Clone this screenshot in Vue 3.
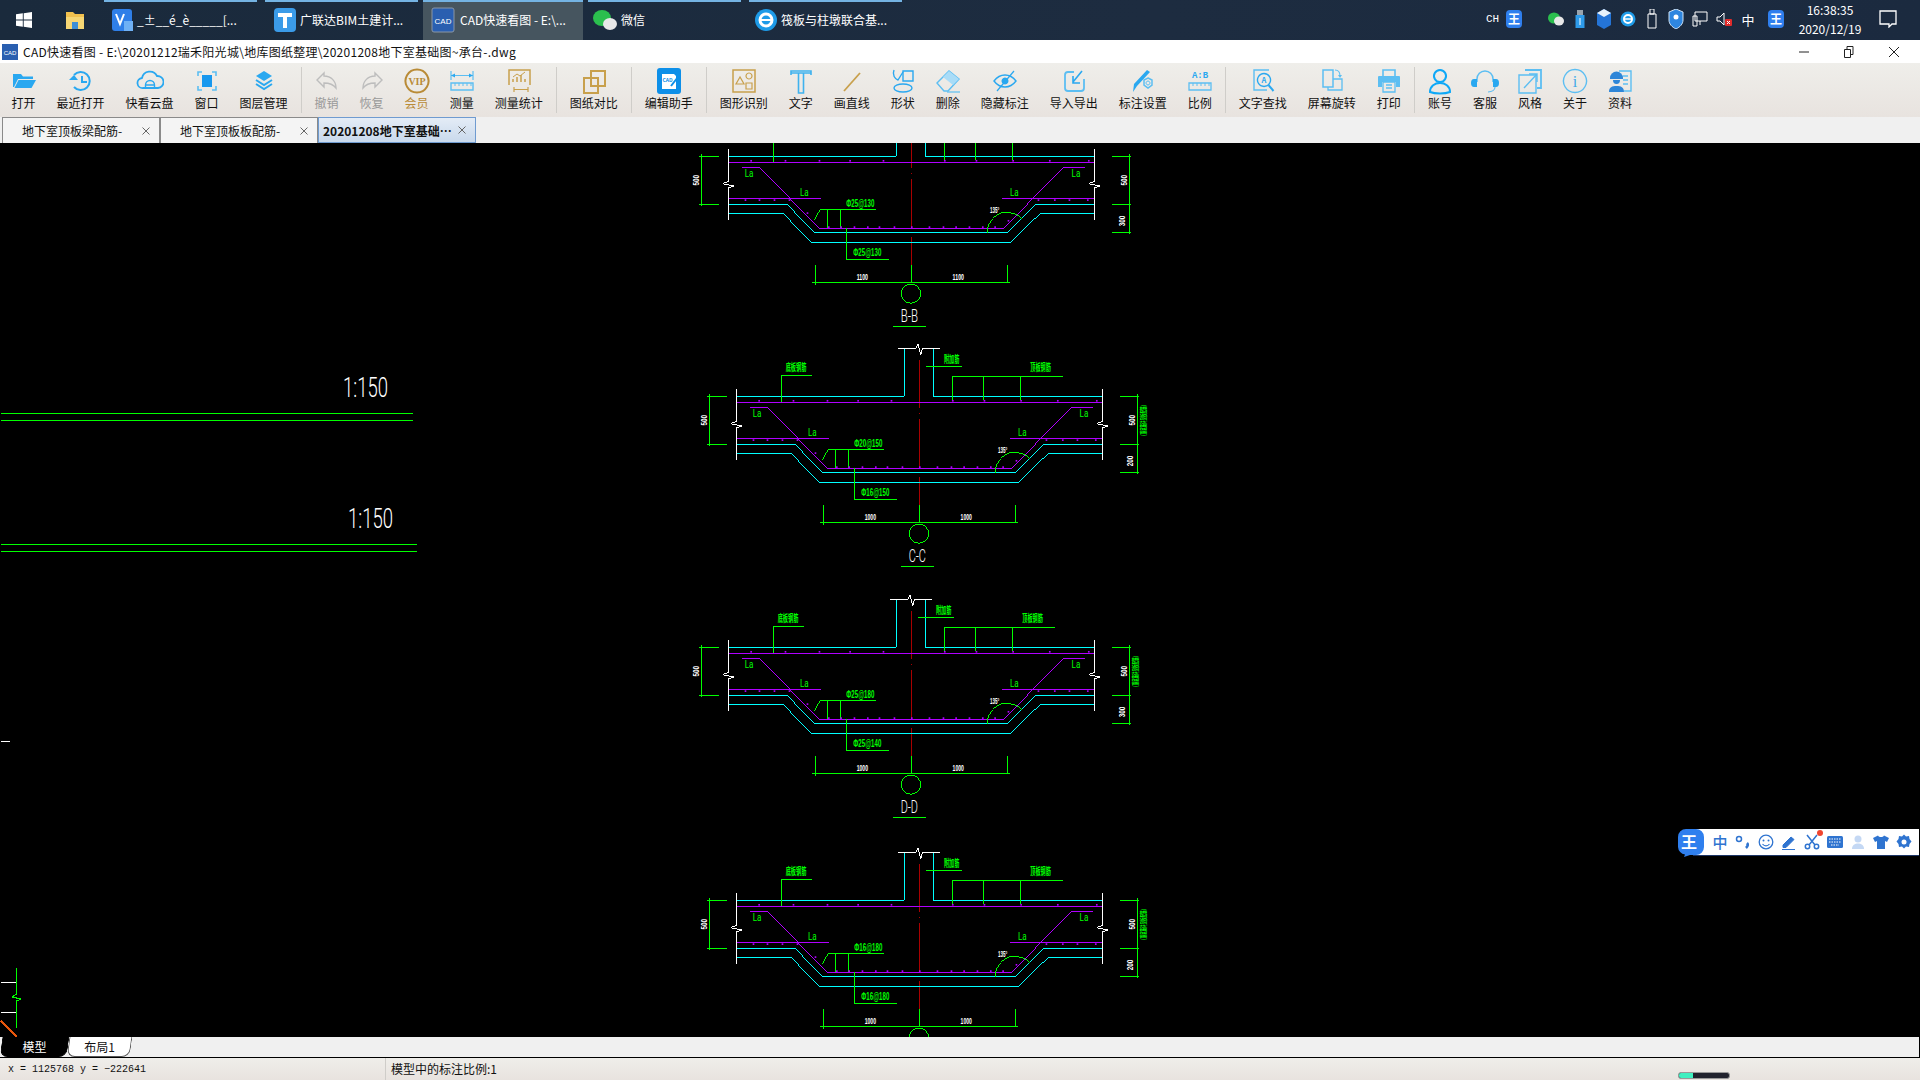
<script setup>
const BLUE = '#2aa8f0'
const SKY = '#5cbef2'
const GOLD = '#c8a04c'
const GREY = '#bdbdbd'

const s = (d, c = BLUE, w = 1.5) => ({ d, s: c, w })
const f = (d, c = BLUE) => ({ d, f: c })

const tools = [
  { label: '打开', icon: [f('M3 7h8l2 2.5h10V12H8L4 20H3z'), f('M8.5 13H26l-4.5 8H4.5z')] },
  { label: '最近打开', icon: [s('M7 8A9 9 0 1 1 7 20', BLUE, 2), s('M15 9v6h5', BLUE, 2), f('M2 13l5-5 4 5z')] },
  { label: '快看云盘', icon: [s('M7 21a5 5 0 0 1-1-10 8 8 0 0 1 15-2 6 6 0 0 1 1 12z', BLUE, 1.8), s('M9.5 21v-3a4.5 4.5 0 0 1 9 0v3M9.5 18h9', BLUE, 1.4)] },
  { label: '窗口', icon: [f('M9 8h10v12H9z', '#1898ee'), s('M5 9V5h4M19 5h4v4M23 19v4h-4M9 23H5v-4', SKY, 1.6)] },
  { label: '图层管理', icon: [f('M14 4l8 5-8 5-8-5z'), s('M6 13l8 5 8-5', BLUE, 2), s('M6 17l8 5 8-5', BLUE, 2)] },
  { sep: true },
  { label: '撤销', muted: true, icon: [s('M11 6L4 13l7 7v-4c5 0 9 1 12 5 0-7-5-12-12-12z', GREY, 1.4)] },
  { label: '恢复', muted: true, icon: [s('M17 6l7 7-7 7v-4c-5 0-9 1-12 5 0-7 5-12 12-12z', GREY, 1.4)] },
  { label: '会员', vip: true, icon: [s('M14 2.5a11.5 11.5 0 1 0 .01 0z', '#b98b37', 2)], it: { x: 14, y: 18, size: 10, fill: '#b98b37', text: 'VIP', bold: true, serif: true } },
  { label: '测量', icon: [s('M3 4v9M25 4v9M3 8.5h22', SKY, 1.2), f('M3 8.5l4-2v4zM25 8.5l-4-2v4z'), s('M3 16h22v7H3z', SKY, 1.4), s('M7 16v3M11 16v3M15 16v3M19 16v3M23 16v3', SKY, 1)] },
  { label: '测量统计', icon: [s('M4 18V3h21v15', GOLD, 1.5), s('M8 15v-3M12 15v-5M16 15v-7M20 15v-3', GOLD, 1.5), s('M8 10l4-3 3 2 5-4', GOLD, 1), s('M9 25v-5M23 25v-5M9 22.5h14', GOLD, 1.2)] },
  { sep: true },
  { label: '图纸对比', icon: [s('M11 4h14v15H11z', GOLD, 2), s('M4 11h14v15H4z', GOLD, 2)] },
  { sep: true },
  { label: '编辑助手', icon: [f('M5 1h18a3 3 0 0 1 3 3v20a3 3 0 0 1-3 3H5a3 3 0 0 1-3-3V4a3 3 0 0 1 3-3z', '#0d8fe8'), f('M7 7h12l2 2v13H7z', '#ffffff'), s('M16 19l7-9', '#0d8fe8', 2)], it: { x: 12.5, y: 15, size: 5, fill: '#0d8fe8', text: 'CAD', bold: true } },
  { sep: true },
  { label: '图形识别', icon: [s('M3 3h22v22H3z', GOLD, 1.5), s('M10 10l-4 7h8z', GOLD, 1.2), s('M19 6a3 3 0 1 0 .01 0z', GOLD, 1.2), s('M16 16h6v6h-6z', GOLD, 1.2)] },
  { label: '文字', icon: [s('M4 8V4h20v4M4 6h20', '#3fb2ee', 1.6), s('M11.5 6v20h5V6', '#3fb2ee', 1.6)] },
  { label: '画直线', icon: [s('M6 24L22 6', GOLD, 1.8)] },
  { label: '形状', icon: [s('M14 4h10v10H14z', BLUE, 1.4), s('M5 21a9 4 0 1 0 18 0 9 4 0 1 0-18 0', BLUE, 1.4), s('M5 3C3 8 6 12 9 13L14 5', BLUE, 1.4)] },
  { label: '删除', icon: [s('M3 16L15 4l10 8-11 12H10z', SKY, 1.4), f('M9 10l6-6 10 8-6 6z', '#a9dcf7'), s('M13 25h13', SKY, 1.2)] },
  { label: '隐藏标注', icon: [s('M3 14c6-8 16-8 22 0-6 8-16 8-22 0z', BLUE, 1.4), f('M14 10.5a3.5 3.5 0 1 0 .01 0z'), s('M6 24L23 4', BLUE, 1.2)] },
  { label: '导入导出', icon: [s('M14 5H8a3 3 0 0 0-3 3v13a3 3 0 0 0 3 3h13a3 3 0 0 0 3-3v-9', SKY, 1.8), s('M22 4L13 15M13 9v7h7', BLUE, 1.6)] },
  { label: '标注设置', icon: [f('M18 3l3 2-13 14-4 6 1-8z'), s('M19 11l4 2v5l-4 3-4-3v-5z', SKY, 1.5), s('M19 14a2 2 0 1 0 .01 0z', SKY, 1)] },
  { label: '比例', icon: [s('M3 16h22v7H3z', SKY, 1.3), s('M7 16v3M11 16v3M15 16v3M19 16v3M23 16v3', SKY, 1)], it: { x: 14, y: 11, size: 9, fill: BLUE, text: 'A:B', bold: true, mono: true } },
  { sep: true },
  { label: '文字查找', icon: [s('M20 3H5v20h13', SKY, 1.4), s('M15 6.5a6.5 6.5 0 1 0 .01 0z', BLUE, 1.4), s('M19.5 18l5 6', BLUE, 2)], it: { x: 15, y: 16, size: 7.5, fill: BLUE, text: 'A', bold: true } },
  { label: '屏幕旋转', icon: [s('M5 3h10v17H5z', SKY, 1.5), s('M15 12h9v11H10v-3', SKY, 1.3), s('M17 3c3 0 5 2 5 6', SKY, 1.1), f('M20 8h4l-2 3z', SKY)] },
  { label: '打印', icon: [s('M8 9V3h12v6', SKY, 1.6), f('M4 9h20a1 1 0 0 1 1 1v10h-4v-5H7v5H3V10a1 1 0 0 1 1-1z', SKY), s('M8 15h12v10H8zM11 18h6M11 21h6', SKY, 1.3)] },
  { sep: true },
  { label: '账号', icon: [s('M14 3a6 6 0 1 0 .01 0z', '#0ea8f7', 2), s('M4 25c0-6 5-9 10-9s10 3 10 9c-5 2-15 2-20 0z', '#0ea8f7', 2)] },
  { label: '客服', icon: [s('M6 15v-3a8 8 0 0 1 16 0v3', SKY, 1.5), f('M3 12h3v8H3a3 4 0 0 1 0-8zM22 12h3a3 4 0 0 1 0 8h-3z', BLUE), s('M24 20c0 3-3 5-7 5', SKY, 1.2)] },
  { label: '风格', icon: [s('M9 3h16v18h-4', SKY, 1.8), s('M3 8h17v18H3z', SKY, 1.4), s('M8 21L21 7M13 7h8v8', SKY, 1.4)] },
  { label: '关于', icon: [s('M14 2.5a11.5 11.5 0 1 0 .01 0z', SKY, 1.4)], it: { x: 14, y: 20, size: 16, fill: '#3fa9e8', text: 'i', serif: true } },
  { label: '资料', icon: [s('M13 4h12v20H18M17 9h5M17 13h5M17 17h5', SKY, 1.4), f('M4 11a6.5 6.5 0 0 1 13 0v1H4z', '#2e86d8'), f('M7 13h7a3.5 4 0 0 1-7 0zM3 25c0-5 3-6 7.500-6s7.500 1 7.500 6z', '#2e86d8')] }
]

const tabs = [
  { name: '地下室顶板梁配筋-' },
  { name: '地下室顶板板配筋-' },
  { name: '20201208地下室基础…', active: true }
]

const sections = [
  { cx: 911.3, top: 108.3, name: 'B-B', bar1: 'Φ25@130', bar2: 'Φ25@130', dim: '1100', h2: '300' },
  { cx: 919.3, top: 348.3, name: 'C-C', bar1: 'Φ20@150', bar2: 'Φ16@150', dim: '1000', h2: '200', full: true },
  { cx: 911.3, top: 599.3, name: 'D-D', bar1: 'Φ25@180', bar2: 'Φ25@140', dim: '1000', h2: '300', full: true },
  { cx: 919.3, top: 852.3, name: '', bar1: 'Φ16@180', bar2: 'Φ16@180', dim: '1000', h2: '200', full: true }
]

// 所有坐标按 C-C 剖面量取，再按组平移
const white = 'M169 747V845L152 851L186 858L169 864V960M1267 747V845L1250 851L1284 858L1267 864V960M655 625H708L714 612L722 645L728 625H780'
const cyan = 'M170 769H673V625M760 625V769H1267M170 913H345L427 997H1008L1090 913H1267M170 940H333L418 1027H1017L1105 940H1267'
const purple = 'M168 787H1267M210 802H262L442 985H995L1175 802H1238M168 895H447M990 895H1267'
const red = 'M718 660V803M718 818V823M718 838V985M718 1010V1095'
const green = 'M88 763V918M82 769H141M82 913H141M1373 763V1003M1320 769H1378M1320 913H1378M1320 997H1378M304 787V706H395M738 679H846M817 780V709H1148M910 709V780M1021 709V780M427 960L445 928H611M466 928V985M505 928V985M523 985V1078H650M430 1095V1155M1006 1095V1150M420 1147H1013M718 1095V1150M947 1000V985C955 955 980 937 1000 937C1020 937 1040 945 1050 957'

const dots = [
  [235, 780], [338, 780], [440, 780], [532, 780], [632, 780], [816, 780], [911, 780], [1021, 780], [1131, 780], [1248, 780],
  [218, 898], [260, 898], [305, 898], [350, 898], [1097, 898], [1146, 898], [1190, 898], [1245, 898],
  [468, 979], [505, 979], [545, 979], [585, 979], [620, 979], [665, 979], [717, 979], [770, 979], [812, 979], [850, 979], [890, 979], [930, 979], [967, 979],
  [404, 937], [1007, 960]
]

const laMarks = [
  { x: 231, y: 832 },
  { x: 397, y: 887 },
  { x: 1212, y: 832 },
  { x: 1027, y: 887 }
]
</script>

<template>
  <div class="screen">
    <div class="taskbar">
      <div class="start">
        <svg width="16" height="16" viewBox="0 0 16 16"><path d="M0 2.300 6.800 1.300V7.500H0zM7.700 1.200 16 0V7.500H7.700zM0 8.400H6.800V14.700L0 13.700zM7.700 8.400H16V16L7.700 14.800z" fill="#fff"/></svg>
      </div>
      <div class="explorer">
        <svg width="22" height="22" viewBox="0 0 22 22"><path d="M2 3h7l2 2h9v15H2z" fill="#f2c14e"/><path d="M2 8h18v12H2z" fill="#f7d774"/><path d="M8 13h6v7H8z" fill="#3d8fd6"/></svg>
      </div>
      <div class="task">
        <svg width="22" height="26" viewBox="0 0 22 26"><rect y="2" width="20" height="22" rx="3" fill="#2f7fe8"/><path d="M4 7l4 10 4-10" stroke="#fff" stroke-width="2" fill="none"/><rect x="12" y="14" width="9" height="10" fill="#6fb1f5"/></svg>
        <span>_±__é_è_____[...</span>
      </div>
      <div class="task">
        <svg width="24" height="26" viewBox="0 0 24 26"><rect x="1" y="1" width="22" height="24" rx="4" fill="#3b9be8"/><path d="M5 6h14v4h-5v11h-4V10H5z" fill="#fff"/></svg>
        <span>广联达BIM土建计...</span>
      </div>
      <div class="task task-active">
        <svg width="24" height="26" viewBox="0 0 24 26"><rect x="1" y="1" width="22" height="24" rx="2" fill="#2a5fb0" stroke="#8a97a5"/><text x="12" y="17" class="ico-cad">CAD</text></svg>
        <span>CAD快速看图 - E:\...</span>
      </div>
      <div class="task task-wx">
        <svg width="26" height="26" viewBox="0 0 26 26"><ellipse cx="10" cy="11" rx="9" ry="8" fill="#2bbf4e"/><ellipse cx="18" cy="17" rx="7" ry="6" fill="#e8e8e8"/></svg>
        <span>微信</span>
      </div>
      <div class="task task-ie">
        <svg width="24" height="26" viewBox="0 0 24 26"><circle cx="12" cy="13" r="11" fill="#1e9be8"/><circle cx="12" cy="13" r="6" fill="none" stroke="#fff" stroke-width="3"/><path d="M6 13h12" stroke="#fff" stroke-width="2"/></svg>
        <span>筏板与柱墩联合基...</span>
      </div>

      <div class="tray">
        <span class="tray-ch">CH</span>
        <span class="wang">王</span>
        <span class="slot"><svg width="18" height="16" viewBox="0 0 18 16"><ellipse cx="7" cy="7" rx="6" ry="5.500" fill="#2bbf4e"/><ellipse cx="12" cy="10" rx="5" ry="4.500" fill="#e8e8e8"/></svg></span>
        <span class="slot"><svg width="12" height="18" viewBox="0 0 12 18"><rect x="3" y="0" width="6" height="5" fill="#9aa4ad"/><rect x="1.500" y="5" width="9" height="13" fill="#2e9bea"/><path d="M6 8v7" stroke="#fff"/></svg></span>
        <span class="slot"><svg width="16" height="20" viewBox="0 0 16 20"><path d="M8 0l7 4v12l-7 4-7-4V4z" fill="#2474d6"/><path d="M8 0l7 4-7 4-7-4z" fill="#e8f2fb"/></svg></span>
        <span class="slot"><svg width="16" height="16" viewBox="0 0 16 16"><circle cx="8" cy="8" r="7.500" fill="#1e9be8"/><circle cx="8" cy="8" r="4" fill="none" stroke="#fff" stroke-width="2"/><path d="M4 8h8" stroke="#fff" stroke-width="1.500"/></svg></span>
        <span class="slot"><svg width="12" height="20" viewBox="0 0 12 20"><path d="M4 0h4v5H4zM2 5h8v14H2z" fill="none" stroke="#fff"/></svg></span>
        <span class="slot"><svg width="16" height="20" viewBox="0 0 16 20"><path d="M8 0l7 3v8c0 4-3 7-7 9-4-2-7-5-7-9V3z" fill="#2e86e0" stroke="#cfe4f8"/><circle cx="8" cy="8" r="2.500" fill="#fff"/></svg></span>
        <span class="slot"><svg width="16" height="16" viewBox="0 0 16 16"><path d="M3 1h12v9H3zM8 10v4M1 5h4v10H1z" fill="none" stroke="#fff"/></svg></span>
        <span class="slot"><svg width="16" height="16" viewBox="0 0 16 16"><path d="M1 6h3l4-4v12l-4-4H1z" fill="none" stroke="#fff"/><rect x="9" y="8" width="7" height="7" rx="1" fill="#e02b2b"/><path d="M11 10l3 3M14 10l-3 3" stroke="#fff"/></svg></span>
        <span class="slot tray-zh">中</span>
        <span class="wang wang-2">王</span>
        <div class="clock">
          <span>16:38:35</span>
          <span>2020/12/19</span>
        </div>
        <svg class="notify" width="18" height="18" viewBox="0 0 18 18"><path d="M1 1h16v13h-4l-3 3v-3H1z" fill="none" stroke="#fff" stroke-width="1.300"/></svg>
      </div>
    </div>

    <div class="titlebar">
      <svg width="16" height="16" viewBox="0 0 16 16"><rect width="16" height="16" fill="#2a5fb0"/><text x="8" y="11" class="ico-cad-small">CAD</text></svg>
      <span class="title-text">CAD快速看图 - E:\20201212瑞禾阳光城\地库图纸整理\20201208地下室基础图~承台-.dwg</span>
      <div class="win-btns">
        <svg width="12" height="12" viewBox="0 0 12 12"><path d="M1 6h10" stroke="#222"/></svg>
        <svg width="12" height="12" viewBox="0 0 12 12"><path d="M1.500 3.500h6v8h-6zM4 3.500V.5h6v8H7.500" fill="none" stroke="#222"/></svg>
        <svg width="12" height="12" viewBox="0 0 12 12"><path d="M1 1l10 10M11 1L1 11" stroke="#222"/></svg>
      </div>
    </div>

    <div class="toolbar">
      <template v-for="(t, i) in tools" :key="i">
        <div v-if="t.sep" class="tool-sep"></div>
        <div v-else class="tool" :class="{ muted: t.muted, vip: t.vip }">
          <svg class="tool-icon" width="28" height="28" viewBox="0 0 28 28">
            <path v-for="(p, j) in t.icon" :key="j" :d="p.d" :fill="p.f || 'none'" :stroke="p.s || 'none'" :stroke-width="p.w || 0" />
            <text v-if="t.it" :x="t.it.x" :y="t.it.y" :fill="t.it.fill" :font-size="t.it.size" text-anchor="middle" :class="{ 'it-bold': t.it.bold, 'it-serif': t.it.serif, 'it-mono': t.it.mono }">{{ t.it.text }}</text>
          </svg>
          <span class="tool-label">{{ t.label }}</span>
        </div>
      </template>
    </div>

    <div class="tabs">
      <div v-for="tab in tabs" :key="tab.name" class="tab" :class="{ active: tab.active }">
        <span class="tab-name">{{ tab.name }}</span>
        <svg class="tab-close" width="8" height="8" viewBox="0 0 8 8"><path d="M.5.500l7 7M7.500.500l-7 7" stroke="#666"/></svg>
      </div>
    </div>

    <div class="canvas">
      <svg class="drawing" width="1920" height="894" viewBox="0 143 1920 894">
        <g shape-rendering="crispEdges" fill="none">
          <path d="M1 413.500H413M1 420.500H413M1 544.500H417M1 551.500H417" stroke="#00ff00" />
          <path d="M1 741.500H10M1 982.500H16M1 1012.500H16" stroke="#fff" />
          <path d="M16.500 968V994L12 997L21 999L16.500 1001V1028" stroke="#00ff00" />
          <path d="M1 1021L17 1037" stroke="#e8560c" stroke-width="2" />
        </g>
        <text x="343" y="397" textLength="45" lengthAdjust="spacingAndGlyphs" class="scale-text">1:150</text>
        <text x="348" y="528" textLength="45" lengthAdjust="spacingAndGlyphs" class="scale-text">1:150</text>

        <g v-for="sec in sections" :key="sec.cx + '-' + sec.top" :transform="`translate(${sec.cx} ${sec.top}) scale(0.3333) translate(-718 -625)`">
          <g shape-rendering="crispEdges" fill="none" stroke-width="3">
            <path :d="red" stroke="#a80000" />
            <path :d="cyan" stroke="#00ffff" />
            <path :d="purple" stroke="#b000ff" />
            <path :d="white" stroke="#fff" />
            <path :d="green" stroke="#00ff00" />
            <circle cx="717" cy="1181" r="29" stroke="#00ff00" />
            <path v-if="sec.name" d="M663 1281H762" stroke="#00ff00" />
          </g>
          <rect v-for="d in dots" :key="d[0] + '-' + d[1]" :x="d[0]" :y="d[1]" width="5" height="5" fill="#b000ff" />

          <text v-for="m in laMarks" :key="m.x" :x="m.x" :y="m.y" text-anchor="middle" textLength="26" lengthAdjust="spacingAndGlyphs" class="t-la">La</text>

          <template v-if="sec.full">
            <text x="348" y="694" text-anchor="middle" textLength="62" lengthAdjust="spacingAndGlyphs" class="t-cn">底板钢筋</text>
            <text x="815" y="668" text-anchor="middle" textLength="46" lengthAdjust="spacingAndGlyphs" class="t-cn">附加筋</text>
            <text x="1082" y="694" text-anchor="middle" textLength="62" lengthAdjust="spacingAndGlyphs" class="t-cn">顶板钢筋</text>
            <text transform="translate(1397 842) rotate(-90)" text-anchor="middle" textLength="105" lengthAdjust="spacingAndGlyphs" class="t-note">（顶底筋详见板配筋）</text>
          </template>

          <text x="565" y="920" text-anchor="middle" textLength="84" lengthAdjust="spacingAndGlyphs" class="t-bar">{{ sec.bar1 }}</text>
          <text x="586" y="1069" text-anchor="middle" textLength="84" lengthAdjust="spacingAndGlyphs" class="t-bar">{{ sec.bar2 }}</text>
          <text x="968" y="938" text-anchor="middle" textLength="28" lengthAdjust="spacingAndGlyphs" class="t-white">135°</text>

          <text x="571" y="1139" text-anchor="middle" textLength="34" lengthAdjust="spacingAndGlyphs" class="t-white">{{ sec.dim }}</text>
          <text x="859" y="1139" text-anchor="middle" textLength="34" lengthAdjust="spacingAndGlyphs" class="t-white">{{ sec.dim }}</text>

          <text transform="translate(80 841) rotate(-90)" text-anchor="middle" textLength="32" lengthAdjust="spacingAndGlyphs" class="t-white">500</text>
          <text transform="translate(1364 841) rotate(-90)" text-anchor="middle" textLength="32" lengthAdjust="spacingAndGlyphs" class="t-white">500</text>
          <text transform="translate(1358 963) rotate(-90)" text-anchor="middle" textLength="32" lengthAdjust="spacingAndGlyphs" class="t-white">{{ sec.h2 }}</text>

          <text v-if="sec.name" x="712" y="1266" text-anchor="middle" textLength="52" lengthAdjust="spacingAndGlyphs" class="t-name">{{ sec.name }}</text>
        </g>
      </svg>

      <div class="ime">
        <svg class="ime-logo" width="28" height="30" viewBox="0 0 28 30"><path d="M9 1h10a8 8 0 0 1 8 8v10a8 8 0 0 1-8 8H13l-6 2 1-2.500A8 8 0 0 1 1 19V9a8 8 0 0 1 8-8z" fill="#2f7fee"/></svg>
        <span class="ime-logo-text">王</span>
        <span class="ime-zh">中</span>
        <svg width="16" height="16" viewBox="0 0 16 16"><circle cx="4" cy="5" r="2.500" fill="none" stroke="#2f74d0" stroke-width="1.500"/><path d="M12 9c1 1 1 3-1 5" stroke="#2f74d0" stroke-width="2.500" fill="none"/></svg>
        <svg width="16" height="16" viewBox="0 0 16 16"><circle cx="8" cy="8" r="6.800" fill="none" stroke="#2f74d0" stroke-width="1.300"/><circle cx="5.500" cy="6.500" r="1" fill="#2f74d0"/><circle cx="10.500" cy="6.500" r="1" fill="#2f74d0"/><path d="M4.500 10c2 2.500 5 2.500 7 0" fill="none" stroke="#2f74d0" stroke-width="1.200"/></svg>
        <svg width="16" height="16" viewBox="0 0 16 16"><path d="M2 11l8-8 3 2.500-8 8H2zM1 15.500h13" fill="#2f74d0" stroke="#2f74d0"/></svg>
        <span class="ime-scissors">
          <svg width="16" height="16" viewBox="0 0 16 16"><circle cx="3.500" cy="12.500" r="2.200" fill="none" stroke="#2f74d0" stroke-width="1.500"/><circle cx="12.500" cy="12.500" r="2.200" fill="none" stroke="#2f74d0" stroke-width="1.500"/><path d="M5 11L13 1M11 11L3 1" stroke="#2f74d0" stroke-width="1.500"/></svg>
          <i class="ime-dot"></i>
        </span>
        <svg width="16" height="16" viewBox="0 0 16 16"><rect y="2" width="16" height="12" rx="1.500" fill="#2f74d0"/><path d="M2 5h12M2 8h12M4 11h8" stroke="#fff" stroke-dasharray="1.500 1" fill="none"/></svg>
        <svg width="16" height="16" viewBox="0 0 16 16"><circle cx="8" cy="5" r="3.500" fill="#c4d8f4"/><path d="M2 15c0-4 3-5.500 6-5.500s6 1.500 6 5.500z" fill="#c4d8f4"/></svg>
        <svg width="16" height="16" viewBox="0 0 16 16"><path d="M5 1.500L0 4l2 4 2-1v8h8V7l2 1 2-4-5-2.500c-1 2-5 2-6 0z" fill="#2f74d0"/></svg>
        <svg width="16" height="16" viewBox="0 0 16 16"><path d="M8 .5l2 2 3-.5.500 3 2 2.500-2 2.500-.5 3-3-.5-2 2-2-2-3 .5-.5-3-2-2.500 2-2.500.5-3 3 .5z" fill="#2f74d0"/><circle cx="8" cy="8" r="2.500" fill="#fff"/></svg>
      </div>
    </div>

    <div class="sheets">
      <div class="sheet sheet-active"><span>模型</span></div>
      <div class="sheet"><span>布局1</span></div>
    </div>

    <div class="statusbar">
      <span class="coords">x = 1125768 y = −222641</span>
      <span class="scale-note">模型中的标注比例:1</span>
      <div class="progress"><div class="progress-fill"></div></div>
    </div>
  </div>
</template>

<style scoped>
.screen {
  width: 1920px;
  height: 1080px;
  display: flex;
  flex-direction: column;
  overflow: hidden;
  font-family: "Noto Sans CJK SC", "Liberation Sans", sans-serif;
  font-size: 12px;
  color: #111;
}

.taskbar {
  height: 40px;
  flex-shrink: 0;
  display: flex;
  align-items: stretch;
  background: linear-gradient(90deg, #1a2a3c, #1d2c40 60%, #1b2a3f);
  color: #fff;
}

.start {
  width: 48px;
  display: flex;
  align-items: center;
  justify-content: center;
}

.explorer {
  width: 56px;
  box-sizing: border-box;
  padding-right: 2px;
  display: flex;
  align-items: center;
  justify-content: center;
}

.task {
  width: 153px;
  margin-right: 8px;
  padding: 0 0 3px 8px;
  box-sizing: border-box;
  display: flex;
  align-items: center;
  gap: 3px;
  border-top: 2px solid #74b3e3;
  white-space: nowrap;
  overflow: hidden;
}

.task-active {
  width: 160px;
  margin-left: -3px;
  margin-right: 5px;
  gap: 5px;
  background: #46555f;
}

.task-wx {
  padding-left: 4px;
}

.task-ie {
  padding-left: 5px;
}

.ico-cad {
  font-size: 8px;
  fill: #fff;
  text-anchor: middle;
  font-family: "Liberation Sans", sans-serif;
}

.ico-cad-small {
  font-size: 6px;
  fill: #fff;
  text-anchor: middle;
  font-family: "Liberation Sans", sans-serif;
}

.tray {
  margin-left: auto;
  display: flex;
  align-items: center;
  padding: 0 23px 2px 0;
}

.tray-ch {
  width: 12px;
  margin-right: 8px;
  font-size: 11px;
  font-family: "Liberation Mono", monospace;
}

.wang {
  width: 16px;
  height: 18px;
  border-radius: 4px;
  background: #2f7fee;
  color: #fff;
  font-size: 12px;
  font-weight: 700;
  line-height: 18px;
  text-align: center;
  margin-right: 22px;
}

.slot {
  width: 24px;
  display: flex;
  justify-content: center;
}

.tray-zh {
  font-size: 13px;
}

.wang-2 {
  margin: 0 0 0 8px;
}

.clock {
  width: 74px;
  margin-left: 9px;
  display: flex;
  flex-direction: column;
  align-items: center;
  gap: 2px;
  line-height: 17px;
}

.notify {
  margin-left: 12px;
}

.titlebar {
  height: 23px;
  flex-shrink: 0;
  display: flex;
  align-items: center;
  padding-left: 2px;
  background: #fff;
}

.title-text {
  margin-left: 5px;
  letter-spacing: 0.27px;
  white-space: nowrap;
}

.win-btns {
  margin-left: auto;
  display: flex;
  gap: 33px;
  padding-right: 20px;
}

.toolbar {
  height: 54px;
  flex-shrink: 0;
  display: flex;
  padding-left: 1px;
  background: linear-gradient(180deg, #efeeea, #e8e3df);
}

.tool {
  padding: 4px 10.500px 0;
  display: flex;
  flex-direction: column;
  align-items: center;
  flex-shrink: 0;
}

.tool-icon {
  height: 28px;
  margin: 0 -4px;
}

.tool-label {
  line-height: 16px;
  white-space: nowrap;
}

.muted .tool-label {
  color: #999;
}

.vip .tool-label {
  color: #b98b37;
}

.tool-sep {
  width: 1px;
  margin: 4px 2px 4px 3px;
  background: #cfcdc9;
  flex-shrink: 0;
}

.it-bold {
  font-weight: 700;
}

.it-serif {
  font-family: "Liberation Serif", serif;
}

.it-mono {
  font-family: "Liberation Mono", monospace;
}

.tabs {
  height: 26px;
  flex-shrink: 0;
  display: flex;
  padding-left: 2px;
  background: #f0f0f0;
}

.tab {
  width: 158px;
  box-sizing: border-box;
  display: flex;
  align-items: center;
  padding: 0 9px 0 19px;
  border: 1px solid #8a8a8a;
  border-width: 1px 1px 0 1px;
  background: #f4f4f4;
}

.tab-name {
  white-space: nowrap;
}

.tab-close {
  margin-left: auto;
}

.tab.active {
  padding-left: 4px;
  border: 1px solid #6f9bd0;
  font-weight: 700;
  background: linear-gradient(180deg, #e4ecf6, #c9d9ec);
}

.canvas {
  flex: 1;
  position: relative;
  overflow: hidden;
  background: #000;
}

.drawing {
  display: block;
}

.scale-text {
  fill: #fff;
  font-size: 28px;
  font-family: Roboto, "Liberation Sans", sans-serif;
  font-weight: 300;
}

.t-la {
  fill: #00ff00;
  font-size: 34px;
  font-family: Roboto, "Liberation Sans", sans-serif;
  font-weight: 400;
}

.t-cn {
  fill: #00ff00;
  font-size: 30px;
  font-weight: 700;
}

.t-note {
  fill: #00ff00;
  font-size: 20px;
  font-weight: 700;
}

.t-bar {
  fill: #00ff00;
  font-size: 30px;
  font-weight: 700;
  font-family: "Liberation Sans", sans-serif;
}

.t-white {
  fill: #fff;
  font-size: 28px;
  font-weight: 700;
  font-family: "Liberation Sans", sans-serif;
}

.t-name {
  fill: #fff;
  font-size: 54px;
  font-family: Roboto, "Liberation Sans", sans-serif;
  font-weight: 300;
}

.ime {
  position: absolute;
  left: 1693px;
  top: 686px;
  width: 226px;
  height: 27px;
  box-sizing: border-box;
  display: flex;
  align-items: center;
  gap: 7px;
  padding-left: 19px;
  background: #fff;
  border-bottom: 1px solid #1c3566;
}

.ime-logo {
  position: absolute;
  left: -16px;
  top: -1px;
}

.ime-logo-text {
  position: absolute;
  left: -12px;
  top: 2px;
  font-size: 16px;
  font-weight: 700;
  color: #fff;
  line-height: 20px;
}

.ime-zh {
  width: 16px;
  font-size: 15px;
  line-height: 16px;
  font-weight: 500;
  color: #2f74d0;
  text-align: center;
}

.ime-scissors {
  position: relative;
  display: flex;
}

.ime-dot {
  position: absolute;
  right: -3px;
  top: -4px;
  width: 6px;
  height: 6px;
  border-radius: 50%;
  background: #f0452f;
}

.sheets {
  height: 20px;
  flex-shrink: 0;
  display: flex;
  padding-left: 1px;
  background: #f0f0f0;
  border-right: 1px solid #000;
  color: #111;
}

.sheet {
  width: 63px;
  line-height: 19px;
  text-align: center;
  background: #fff;
  border: 1px solid #555;
  border-top: none;
  border-radius: 0 0 8px 8px;
  box-sizing: border-box;
  transform: skewX(-8deg);
}

.sheet span {
  display: block;
  transform: skewX(8deg);
}

.sheet-active {
  width: 67px;
  background: #000;
  color: #fff;
  border-color: #000;
}

.statusbar {
  height: 23px;
  flex-shrink: 0;
  box-sizing: border-box;
  border-top: 1px solid #000;
  display: flex;
  align-items: center;
  padding-left: 8px;
  background: linear-gradient(180deg, #efeeea, #e8e3df);
}

.coords {
  width: 377px;
  font-family: "Liberation Mono", monospace;
  font-size: 10px;
}

.scale-note {
  padding-left: 5px;
  border-left: 1px solid #cfcdc9;
  line-height: 22px;
}

.progress {
  margin-left: auto;
  margin-right: 190px;
  margin-top: 13px;
  width: 52px;
  height: 7px;
  box-sizing: border-box;
  border: 1px solid #999;
  border-radius: 3px;
  background: #22232e;
  overflow: hidden;
}

.progress-fill {
  width: 14px;
  height: 100%;
  background: #3ff0c0;
}
</style>

<style>
html, body {
  margin: 0;
  overflow: hidden;
}
</style>
